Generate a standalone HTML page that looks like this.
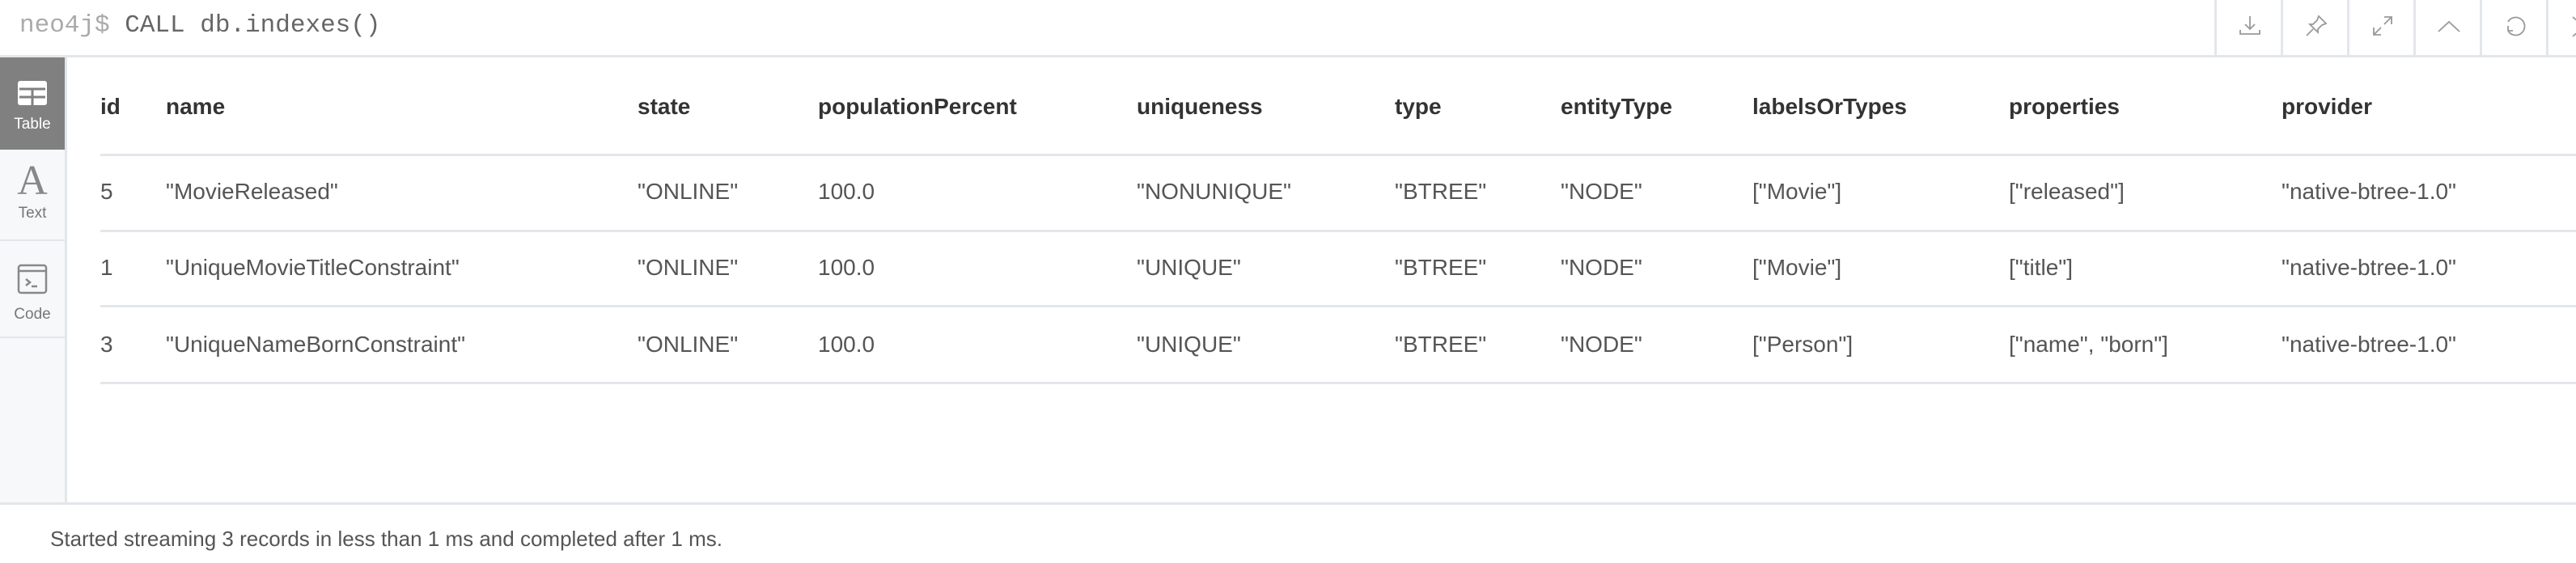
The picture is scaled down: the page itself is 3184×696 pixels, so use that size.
<!DOCTYPE html>
<html><head><meta charset="utf-8"><style>
*{margin:0;padding:0;box-sizing:border-box}
body{width:3184px;height:696px;background:#fff;font-family:"Liberation Sans",sans-serif;position:relative;overflow:hidden}
.top{position:absolute;left:0;top:0;width:3184px;height:71px;border-bottom:3px solid #e3e6ea}
.cmd{position:absolute;left:24px;top:14px;font-family:"Liberation Mono",monospace;font-size:31px;color:#666}
.cmd span{color:#aaa}
.tb{position:absolute;top:0;height:68px;width:82px;border-left:3px solid #e3e6ea}
.tb svg{position:absolute;left:26px;top:17px}
.side{position:absolute;left:0;top:71px;width:83px;height:551px;background:#f7f8fa;border-right:3px solid #e3e6ea}
.sb{position:absolute;left:0;width:80px;text-align:center;font-size:19px;color:#777;border-bottom:2px solid #e3e6ea}
.foot{position:absolute;left:0;top:621px;width:3184px;height:75px;border-top:3px solid #e3e6ea}
.foot div{position:absolute;left:62px;top:27px;font-size:26px;color:#555}
.t{position:absolute;font-size:28px;color:#555;white-space:nowrap}
.h{font-weight:bold;color:#333}
.line{position:absolute;left:124px;width:3060px;height:3px;background:#e3e6ea}
</style></head><body>
<div class="top"><div class="cmd"><span>neo4j$</span> CALL db.indexes()</div>
<div class="tb" style="left:2737px"><svg width="30" height="30" viewBox="0 0 30 30" fill="none" stroke="#999" stroke-width="1.8"><path d="M15 3v16M9 13l6 6 6-6M3 20v5h24v-5"/></svg></div>
<div class="tb" style="left:2819px"><svg width="30" height="30" viewBox="0 0 30 30" fill="none" stroke="#999" stroke-width="1.8"><path d="M3 27l8-8M18 3l9 9-5 2-5 5 0 4-10-10 4 0 5-5z"/></svg></div>
<div class="tb" style="left:2901px"><svg width="30" height="30" viewBox="0 0 30 30" fill="none" stroke="#999" stroke-width="1.8"><path d="M4 26l9-9M4 17v9h9M26 4l-9 9M17 4h9v9"/></svg></div>
<div class="tb" style="left:2983px"><svg width="30" height="30" viewBox="0 0 30 30" fill="none" stroke="#999" stroke-width="1.8"><path d="M2 22l13-12 13 12"/></svg></div>
<div class="tb" style="left:3065px"><svg width="30" height="30" viewBox="0 0 30 30" fill="none" stroke="#999" stroke-width="1.8"><path d="M6 21a11 11 0 1 0 0-11M6 21v-6M6 21h6"/></svg></div>
<div class="tb" style="left:3147px"><svg width="30" height="30" viewBox="0 0 30 30" fill="none" stroke="#999" stroke-width="1.8"><path d="M4 4l14 12M4 28l14-12"/></svg></div>
</div>
<div class="side">
<div class="sb" style="top:0;height:114px;background:#808080;color:#fff;border:none"><svg style="margin-top:28px" width="38" height="32" viewBox="0 0 38 32"><rect x="1" y="1" width="36" height="30" rx="3" fill="#fff"/><path d="M3 11h32M3 21h32M19 11v20" stroke="#808080" stroke-width="3"/></svg><div style="margin-top:6px">Table</div></div>
<div class="sb" style="top:114px;height:113px"><div style="font-family:'Liberation Serif',serif;font-size:52px;color:#888;margin-top:14px;line-height:50px;font-weight:normal">A</div><div style="margin-top:4px">Text</div></div>
<div class="sb" style="top:227px;height:120px"><svg style="margin-top:28px" width="38" height="38" viewBox="0 0 38 38" fill="none" stroke="#888" stroke-width="2.5"><rect x="2" y="2" width="34" height="34" rx="3"/><path d="M2 9h34M11 19l5 4-5 4M18 28h7"/></svg><div style="margin-top:8px">Code</div></div>
</div>
<div class="t h" style="left:124px;top:116px">id</div>
<div class="t h" style="left:205px;top:116px">name</div>
<div class="t h" style="left:788px;top:116px">state</div>
<div class="t h" style="left:1011px;top:116px">populationPercent</div>
<div class="t h" style="left:1405px;top:116px">uniqueness</div>
<div class="t h" style="left:1724px;top:116px">type</div>
<div class="t h" style="left:1929px;top:116px">entityType</div>
<div class="t h" style="left:2166px;top:116px">labelsOrTypes</div>
<div class="t h" style="left:2483px;top:116px">properties</div>
<div class="t h" style="left:2820px;top:116px">provider</div>
<div class="line" style="top:190px"></div>
<div class="t" style="left:124px;top:221px">5</div><div class="t" style="left:205px;top:221px">"MovieReleased"</div><div class="t" style="left:788px;top:221px">"ONLINE"</div><div class="t" style="left:1011px;top:221px">100.0</div><div class="t" style="left:1405px;top:221px">"NONUNIQUE"</div><div class="t" style="left:1724px;top:221px">"BTREE"</div><div class="t" style="left:1929px;top:221px">"NODE"</div><div class="t" style="left:2166px;top:221px">["Movie"]</div><div class="t" style="left:2483px;top:221px">["released"]</div><div class="t" style="left:2820px;top:221px">"native-btree-1.0"</div>
<div class="line" style="top:284px"></div>
<div class="t" style="left:124px;top:315px">1</div><div class="t" style="left:205px;top:315px">"UniqueMovieTitleConstraint"</div><div class="t" style="left:788px;top:315px">"ONLINE"</div><div class="t" style="left:1011px;top:315px">100.0</div><div class="t" style="left:1405px;top:315px">"UNIQUE"</div><div class="t" style="left:1724px;top:315px">"BTREE"</div><div class="t" style="left:1929px;top:315px">"NODE"</div><div class="t" style="left:2166px;top:315px">["Movie"]</div><div class="t" style="left:2483px;top:315px">["title"]</div><div class="t" style="left:2820px;top:315px">"native-btree-1.0"</div>
<div class="line" style="top:377px"></div>
<div class="t" style="left:124px;top:410px">3</div><div class="t" style="left:205px;top:410px">"UniqueNameBornConstraint"</div><div class="t" style="left:788px;top:410px">"ONLINE"</div><div class="t" style="left:1011px;top:410px">100.0</div><div class="t" style="left:1405px;top:410px">"UNIQUE"</div><div class="t" style="left:1724px;top:410px">"BTREE"</div><div class="t" style="left:1929px;top:410px">"NODE"</div><div class="t" style="left:2166px;top:410px">["Person"]</div><div class="t" style="left:2483px;top:410px">["name", "born"]</div><div class="t" style="left:2820px;top:410px">"native-btree-1.0"</div>
<div class="line" style="top:472px"></div>
<div class="foot"><div>Started streaming 3 records in less than 1 ms and completed after 1 ms.</div></div>
</body></html>
